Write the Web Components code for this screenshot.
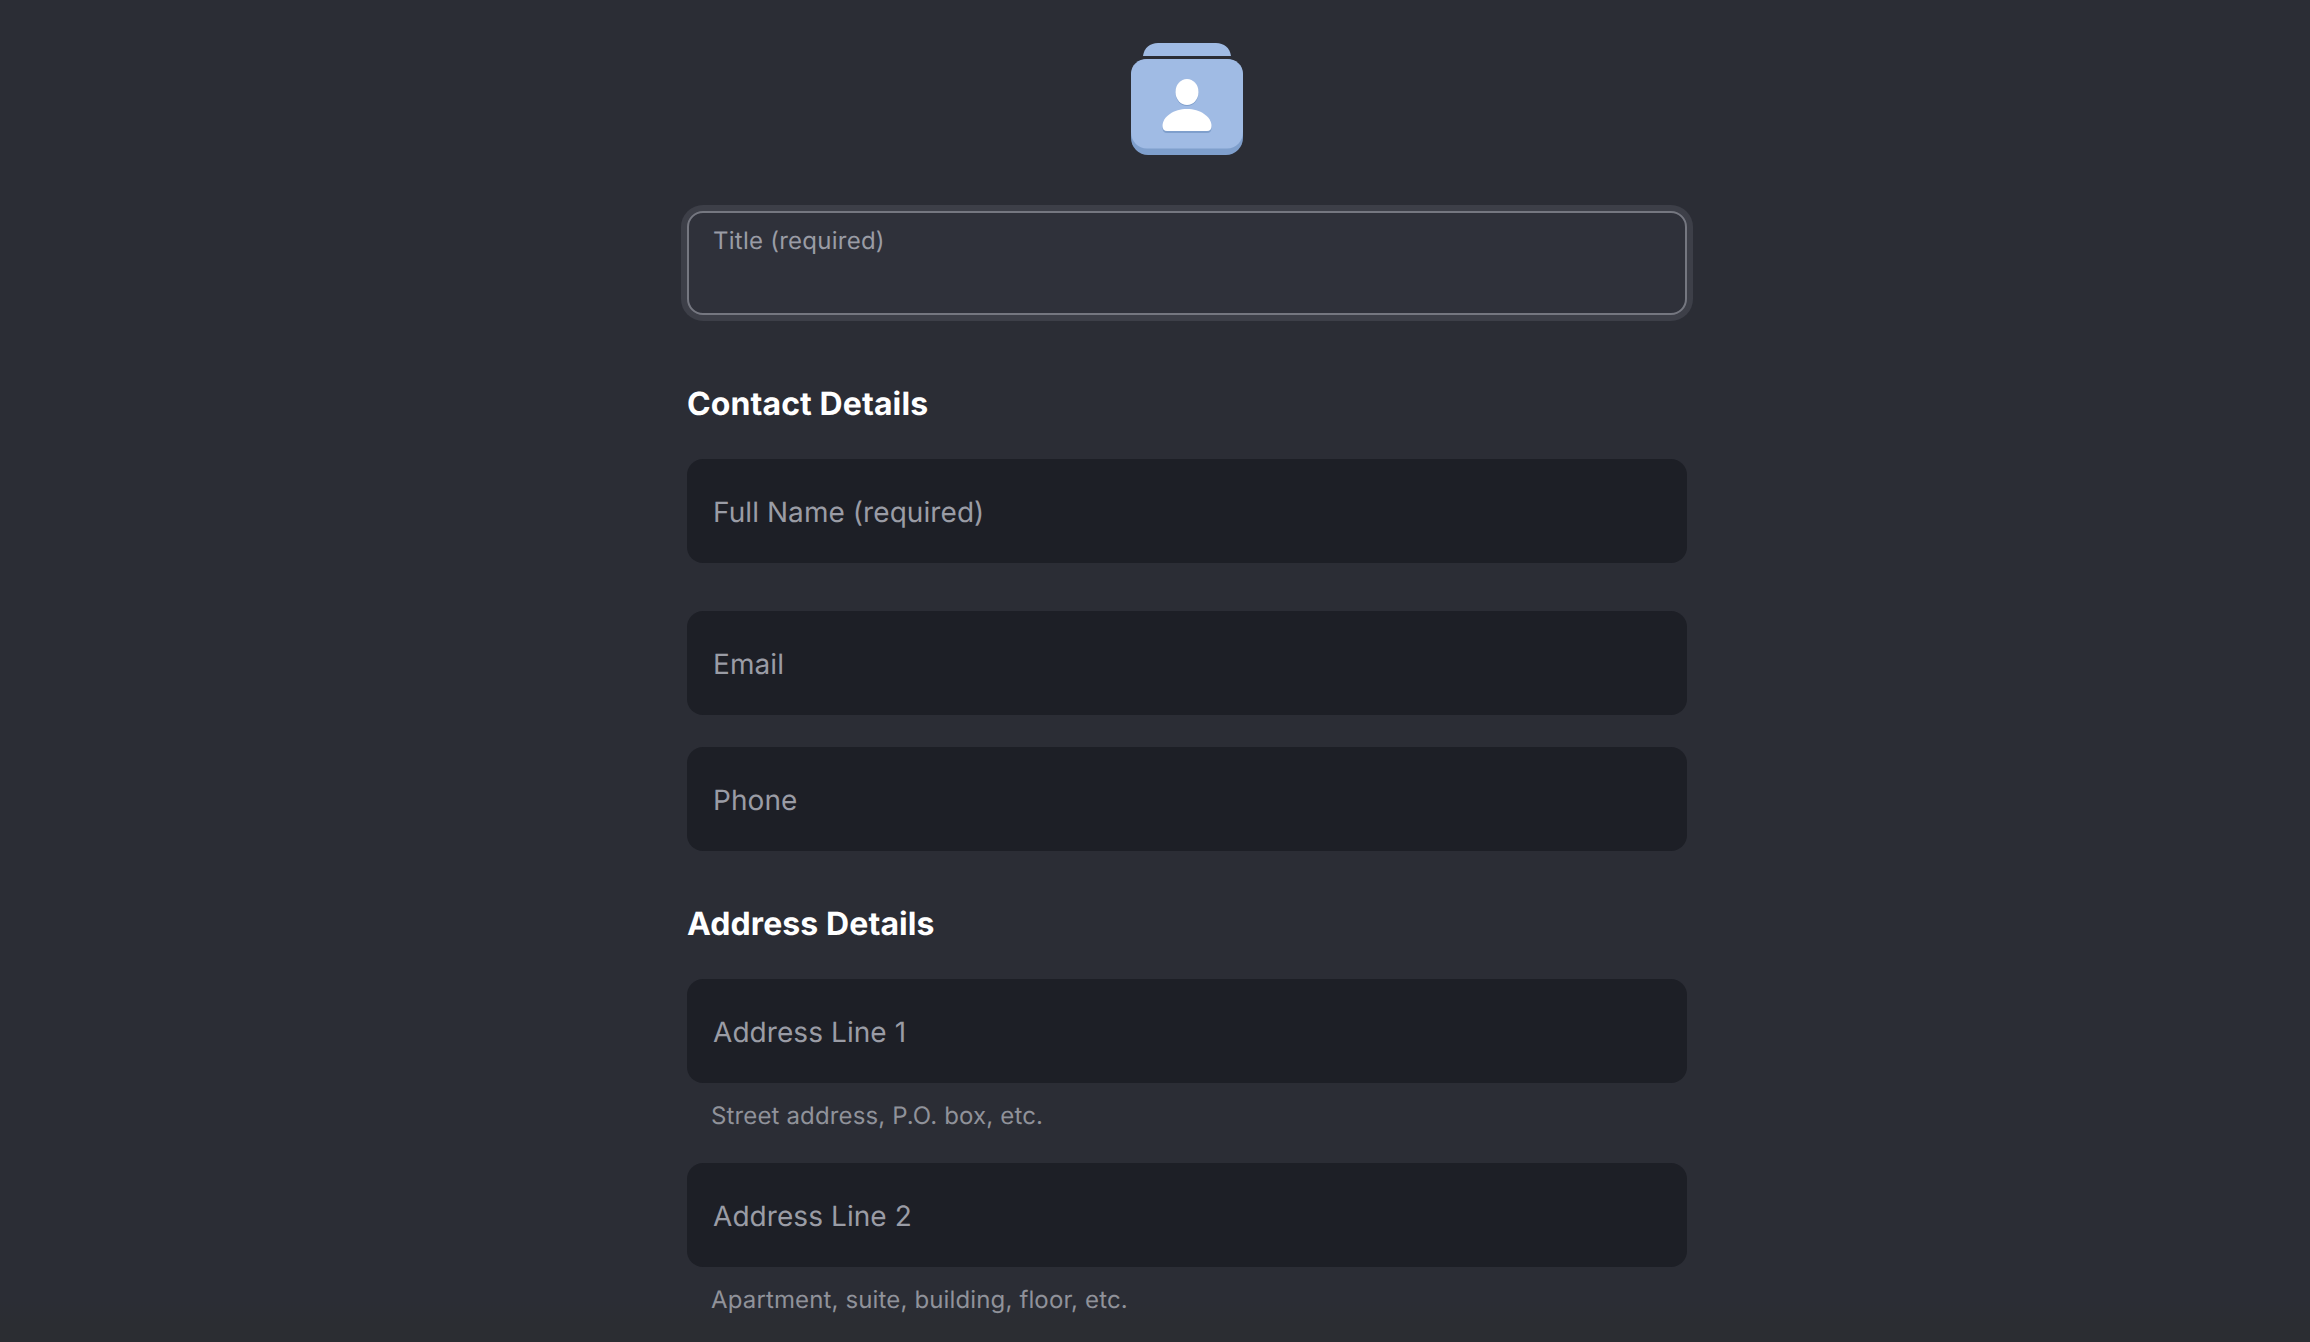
<!DOCTYPE html>
<html lang="en">
<head>
<meta charset="utf-8">
<title>New contact</title>
<style>
  html, body {
    margin: 0;
    height: 100%;
    overflow: hidden;
    background: #2b2d35;
  }
</style>
</head>
<body>
<contact-form>
  <contact-icon slot="icon"></contact-icon>
  <form-field variant="title" label="Title (required)"></form-field>
  <form-heading>Contact Details</form-heading>
  <form-field label="Full Name (required)"></form-field>
  <form-field label="Email" style="margin-top: 48px"></form-field>
  <form-field label="Phone" style="margin-top: 32px"></form-field>
  <form-heading style="margin-top: 48px">Address Details</form-heading>
  <form-field label="Address Line 1" hint="Street address, P.O. box, etc."></form-field>
  <form-field label="Address Line 2" hint="Apartment, suite, building, floor, etc." style="margin-top: 31px"></form-field>
</contact-form>

<script>
  const formTemplate = document.createElement('template')
  formTemplate.innerHTML = `
    <style>
      :host {
        display: flex;
        flex-direction: column;
        align-items: center;
        height: 1342px;
        overflow: hidden;
        padding: 43px 0 0 64px;
        box-sizing: border-box;
        background: linear-gradient(to bottom, #2b2d35 1300px, #2b2d32 1325px);
        font-family: Inter, "Liberation Sans", sans-serif;
        text-rendering: geometricPrecision;
      }

      .icon {
        display: block;
        margin-bottom: 55px;
      }

      .fields {
        display: flex;
        flex-direction: column;
        width: 1000px;
      }
    </style>
    <slot class="icon" name="icon"></slot>
    <div class="fields"><slot></slot></div>
  `

  customElements.define('contact-form',
    /**
     * The page column with the icon and the fields.
     */
    class extends HTMLElement {
      /**
       * Creates an instance of the current type.
       */
      constructor () {
        super()
        this.attachShadow({ mode: 'open' })
          .appendChild(formTemplate.content.cloneNode(true))
      }
    }
  )

  const iconTemplate = document.createElement('template')
  iconTemplate.innerHTML = `
    <style>
      :host {
        display: block;
        width: 112px;
        height: 113px;
      }

      svg {
        display: block;
      }
    </style>
    <svg width="112" height="113" viewBox="0 0 112 113" aria-hidden="true">
      <path d="M12 13C13 5 19 0 27 0H85C93 0 99 5 100 13Z" fill="#a0bbe4"/>
      <rect x="0" y="16" width="112" height="96" rx="17" fill="#7f9fcc"/>
      <path d="M0 31C0 22 7 16 16 16H96C105 16 112 22 112 31V89C112 98 105 105.500 96 105.500H16C7 105.500 0 98 0 89Z" fill="#a0bbe4"/>
      <ellipse cx="56" cy="50" rx="11.5" ry="13" fill="#7f9fcc"/>
      <ellipse cx="56" cy="49" rx="11.5" ry="13" fill="#fff"/>
      <path d="M31.5 85C31.5 75 43 67 56 67C69 67 80.5 75 80.5 85C80.5 88 79 90 76 90H36C33 90 31.5 88 31.5 85Z" fill="#7f9fcc"/>
      <path d="M31.5 83C31.5 73.500 43 66 56 66C69 66 80.500 73.500 80.500 83C80.500 86 79 88 76 88H36C33 88 31.500 86 31.500 83Z" fill="#fff"/>
    </svg>
  `

  customElements.define('contact-icon',
    /**
     * The blue contact card icon.
     */
    class extends HTMLElement {
      /**
       * Creates an instance of the current type.
       */
      constructor () {
        super()
        this.attachShadow({ mode: 'open' })
          .appendChild(iconTemplate.content.cloneNode(true))
      }
    }
  )

  const headingTemplate = document.createElement('template')
  headingTemplate.innerHTML = `
    <style>
      :host {
        display: block;
        margin-top: 64px;
        margin-bottom: 30px;
        color: #fff;
        font-size: 32px;
        font-weight: 700;
        letter-spacing: 0.1px;
        line-height: 50px;
      }
    </style>
    <slot></slot>
  `

  customElements.define('form-heading',
    /**
     * A section heading between the fields.
     */
    class extends HTMLElement {
      /**
       * Creates an instance of the current type.
       */
      constructor () {
        super()
        this.attachShadow({ mode: 'open' })
          .appendChild(headingTemplate.content.cloneNode(true))
      }
    }
  )

  const fieldTemplate = document.createElement('template')
  fieldTemplate.innerHTML = `
    <style>
      :host {
        display: block;
      }

      .box {
        display: flex;
        align-items: center;
        box-sizing: border-box;
        height: 104px;
        padding: 2px 26px 0;
        border-radius: 16px;
        background: #1d1f26;
        color: #9a9ca5;
        font-size: 28px;
        letter-spacing: 0.07px;
      }

      :host([variant="title"]) .box {
        align-items: flex-start;
        padding: 14px 24px;
        border: 2px solid #757780;
        background: #2f313a;
        box-shadow: 0 0 0 6px #3d3f48;
        font-size: 24px;
        letter-spacing: 0.25px;
        line-height: 28px;
      }

      .hint {
        padding: 17px 24px 0;
        color: #90929a;
        font-size: 24px;
        letter-spacing: 0.14px;
        line-height: 32px;
      }

      .hint:empty {
        display: none;
      }
    </style>
    <div class="box"><span class="label"></span></div>
    <div class="hint"></div>
  `

  customElements.define('form-field',
    /**
     * An empty input look-alike with a placeholder and an optional hint.
     */
    class extends HTMLElement {
      /**
       * Creates an instance of the current type.
       */
      constructor () {
        super()
        this.attachShadow({ mode: 'open' })
          .appendChild(fieldTemplate.content.cloneNode(true))

        this.shadowRoot.querySelector('.label').textContent = this.getAttribute('label')
        this.shadowRoot.querySelector('.hint').textContent = this.getAttribute('hint') || ''
      }
    }
  )
</script>
</body>
</html>
